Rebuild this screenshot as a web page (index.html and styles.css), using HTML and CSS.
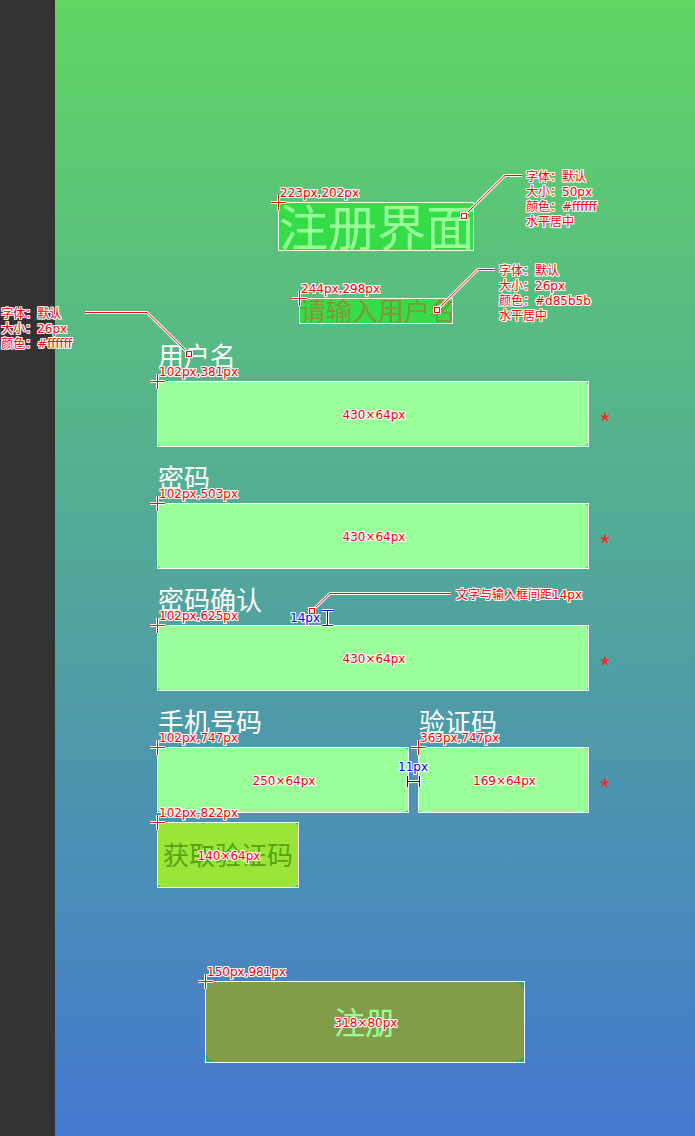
FILE: index.html
```
<!DOCTYPE html>
<html lang="zh-CN">
<head>
<meta charset="utf-8">
<meta name="viewport" content="width=device-width, initial-scale=1">
<title>注册界面</title>
<link rel="stylesheet" href="styles.css">
</head>
<body>
<svg class="defs" width="0" height="0" aria-hidden="true">
  <symbol id="cross" viewBox="0 0 17 17">
    <path d="M1 8.5H16M8.5 1V16" stroke="#fff" stroke-width="3"/>
    <path d="M1 8.5H16M8.5 1V16" stroke="#ff0000"/>
  </symbol>
</svg>
<div class="page">
  <aside class="rail"></aside>
  <main class="screen">
    <header class="heading">
      <div class="marked title-mark">
        <h1 class="title">注册界面</h1>
        <svg class="cross"><use href="#cross"/></svg>
        <span class="note origin">223px,202px</span>
        <div class="callout callout-title">
          <svg class="leader" width="64" height="48"><path class="halo" d="M4 44L45 3.5H62"/><path class="line" d="M4 44L45 3.5H62"/><rect class="pin-halo" x="0" y="40" width="8" height="8"/><rect class="pin" x="1.5" y="41.5" width="5" height="5"/></svg>
          <p class="note">字体：默认<br>大小：50px<br>颜色：#ffffff<br>水平居中</p>
        </div>
      </div>
      <div class="marked message-mark">
        <p class="message">请输入用户名</p>
        <svg class="cross"><use href="#cross"/></svg>
        <span class="note origin">244px,298px</span>
        <div class="callout callout-message">
          <svg class="leader" width="64" height="48"><path class="halo" d="M4 44L45 3.5H62"/><path class="line" d="M4 44L45 3.5H62"/><rect class="pin-halo" x="0" y="40" width="8" height="8"/><rect class="pin" x="1.5" y="41.5" width="5" height="5"/></svg>
          <p class="note">字体：默认<br>大小：26px<br>颜色：#d85b5b<br>水平居中</p>
        </div>
      </div>
    </header>

    <form class="form">
      <div class="row">
        <div class="field">
          <label class="label" for="user">用户名</label>
          <div class="marked">
            <input class="input" id="user" type="text">
            <svg class="cross"><use href="#cross"/></svg>
            <span class="note origin">102px,381px</span>
            <span class="note size">430×64px</span>
            <div class="callout callout-label">
              <p class="note">字体：默认<br>大小：26px<br>颜色：#ffffff</p>
              <svg class="leader" width="110" height="48"><path class="halo" d="M1 3.5H63L105 45"/><path class="line" d="M1 3.5H63L105 45"/><rect class="pin-halo" x="101" y="41" width="8" height="8"/><rect class="pin" x="102.5" y="42.5" width="5" height="5"/></svg>
            </div>
          </div>
        </div>
        <span class="star">*</span>
      </div>

      <div class="row">
        <div class="field">
          <label class="label" for="pass">密码</label>
          <div class="marked">
            <input class="input" id="pass" type="password">
            <svg class="cross"><use href="#cross"/></svg>
            <span class="note origin">102px,503px</span>
            <span class="note size">430×64px</span>
          </div>
        </div>
        <span class="star">*</span>
      </div>

      <div class="row">
        <div class="field">
          <label class="label" for="confirm">密码确认</label>
          <div class="marked">
            <input class="input" id="confirm" type="password">
            <svg class="cross"><use href="#cross"/></svg>
            <span class="note origin">102px,625px</span>
            <span class="note size">430×64px</span>
            <div class="callout callout-gap">
              <svg class="leader" width="144" height="26"><path class="halo" d="M4 21L22 3.5H143"/><path class="line" d="M4 21L22 3.5H143"/><rect class="pin-halo" x="0" y="17" width="8" height="8"/><rect class="pin" x="1.5" y="18.5" width="5" height="5"/></svg>
              <p class="note">文字与输入框间距14px</p>
            </div>
            <div class="measure measure-gap">
              <span class="note blue">14px</span>
              <svg width="13" height="18"><path class="halo" d="M1 1.5H12M1 16.5H12M6.5 1.5V16.5"/><path class="ruler" d="M1 1.5H12M1 16.5H12M6.5 1.5V16.5"/></svg>
            </div>
          </div>
        </div>
        <span class="star">*</span>
      </div>

      <div class="row">
        <div class="pair">
          <div class="field">
            <label class="label" for="phone">手机号码</label>
            <div class="marked">
              <input class="input" id="phone" type="tel">
              <svg class="cross"><use href="#cross"/></svg>
              <span class="note origin">102px,747px</span>
              <span class="note size">250×64px</span>
            </div>
          </div>
          <div class="field">
            <label class="label" for="code">验证码</label>
            <div class="marked">
              <input class="input" id="code" type="text">
              <svg class="cross"><use href="#cross"/></svg>
              <span class="note origin">363px,747px</span>
              <span class="note size">169×64px</span>
              <div class="measure measure-column">
                <span class="note blue">11px</span>
                <svg width="15" height="13"><path class="halo" d="M1.5 1V12M13.5 1V12M1.5 6.5H13.5"/><path class="ruler" d="M1.5 1V12M13.5 1V12M1.5 6.5H13.5"/></svg>
              </div>
            </div>
          </div>
        </div>
        <span class="star">*</span>
      </div>

      <div class="marked code-mark">
        <button class="code-button" type="button">获取验证码</button>
        <svg class="cross"><use href="#cross"/></svg>
        <span class="note origin">102px,822px</span>
        <span class="note size">140×64px</span>
      </div>

      <div class="marked submit-mark">
        <button class="submit" type="submit">注册</button>
        <svg class="cross"><use href="#cross"/></svg>
        <span class="note origin">150px,981px</span>
        <span class="note size">318×80px</span>
      </div>
    </form>
  </main>
</div>
</body>
</html>
```
FILE: styles.css
```
* {
  box-sizing: border-box;
}

body {
  margin: 0;
  font-family: "Noto Sans CJK SC", sans-serif;
  color: #fff;
}

h1,
p {
  margin: 0;
  font-weight: 400;
}

.defs {
  position: absolute;
}

.page {
  display: grid;
  grid-template-columns: 55px 1fr;
  min-height: 100vh;
  overflow: hidden;
}

.rail {
  background: #333;
}

.screen {
  padding: 202px 78px 72px 102px;
  background: linear-gradient(#60d664, #4478d0);
}

.heading {
  display: flex;
  flex-direction: column;
  align-items: center;
  gap: 47px;
  margin-right: 22px;
}

/* Outlined area that carries measurements */
.marked {
  position: relative;
  border: 1px solid #fff;
  background: #20b080;
}

.title-mark {
  width: 196px;
}

.message-mark {
  width: 154px;
}

.title,
.message {
  overflow: hidden;
  white-space: nowrap;
  background: #34dc48;
}

.title {
  height: 47px;
  font-size: 49px;
  line-height: 43px;
  color: #9f9;
}

.message {
  height: 24px;
  font-size: 26px;
  line-height: 22px;
  color: #83973c;
}

.form {
  margin-top: 19px;
}

.row {
  display: flex;
  align-items: flex-end;
  margin-bottom: 18px;
}

.row:has(.pair) {
  margin-bottom: 9px;
}

.field {
  flex: 1;
  min-width: 0;
}

.pair {
  flex: 1;
  display: grid;
  grid-template-columns: 252fr 171fr;
  gap: 9px;
}

.label {
  display: block;
  padding: 0 0 14px 1px;
  font-size: 26px;
  line-height: 24px;
}

.input {
  display: block;
  width: 100%;
  height: 64px;
  padding: 0 16px;
  border: 0;
  border-radius: 3px;
  background: #9f9;
  font: inherit;
  font-size: 26px;
  color: #333;
}

.star {
  width: 28px;
  height: 66px;
  padding: 8px 0 0 10px;
  font-size: 26px;
  line-height: 66px;
  color: #ff2424;
}

button {
  display: block;
  width: 100%;
  padding: 0 0 4px;
  border: 0;
  font: inherit;
}

.code-mark {
  width: 142px;
}

.code-button {
  height: 64px;
  border-radius: 4px;
  background: #9ae638;
  font-size: 26px;
  color: #55a314;
}

.submit-mark {
  width: 320px;
  margin: 93px 0 0 48px;
}

.submit {
  height: 80px;
  border-radius: 10px;
  background: #839c4a;
  font-size: 31px;
  color: #9f9;
}

/* Measurement notes drawn over the layout */
.note {
  font-family: "DejaVu Sans", "Noto Sans CJK SC", sans-serif;
  font-size: 12px;
  line-height: 15px;
  white-space: nowrap;
  color: #f00;
  text-shadow: 1px 0 #fff, -1px 0 #fff, 0 1px #fff, 0 -1px #fff,
    1px 1px #fff, -1px 1px #fff, 1px -1px #fff, -1px -1px #fff;
}

.blue {
  color: #00f;
}

.origin,
.size,
.cross,
.callout,
.measure {
  position: absolute;
  z-index: 1;
  pointer-events: none;
}

.cross {
  top: -9px;
  left: -9px;
  width: 17px;
  height: 17px;
}

.origin {
  top: -17px;
  left: 1px;
}

.size {
  inset: 2px 0 0 2px;
  display: grid;
  place-content: center;
}

.callout {
  display: flex;
  align-items: flex-start;
}

.callout .note {
  margin-top: -2px;
}

.leader {
  flex: none;
  overflow: visible;
}

.halo,
.line,
.ruler {
  fill: none;
}

.halo {
  stroke: #fff;
  stroke-width: 3;
}

.line {
  stroke: #f00;
}

.ruler {
  stroke: #00f;
}

.pin-halo {
  fill: #fff;
}

.pin {
  fill: #fff;
  stroke: #f00;
}

.callout-title {
  top: -31px;
  left: 181px;
  gap: 2px;
}

.callout-message {
  top: -33px;
  left: 133px;
  gap: 2px;
}

.callout-label {
  top: -73px;
  right: 394px;
  gap: 12px;
}

.callout-gap {
  top: -36px;
  left: 150px;
  gap: 4px;
}

.measure {
  display: flex;
}

.measure-gap {
  top: -17px;
  left: 132px;
  gap: 1px;
}

.measure-gap .note {
  padding-top: 2px;
}

.measure-column {
  top: 12px;
  left: -21px;
  flex-direction: column;
  align-items: center;
}
```
